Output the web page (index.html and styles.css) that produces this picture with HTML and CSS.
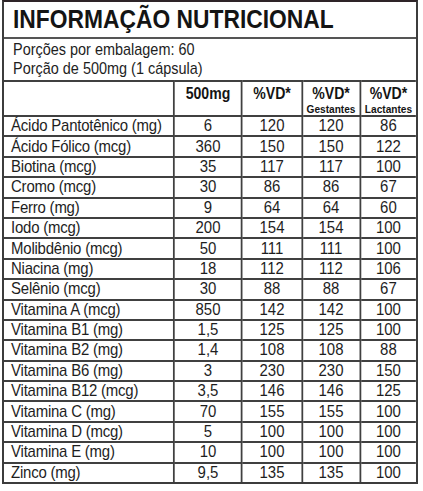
FILE: index.html
```html
<!DOCTYPE html>
<html lang="pt">
<head>
<meta charset="utf-8">
<title>Informação Nutricional</title>
<link rel="stylesheet" href="styles.css">
</head>
<body>
<div class="label">
  <div class="title"><span class="title-text">INFORMAÇÃO NUTRICIONAL</span></div>
  <div class="info">
    <div class="info-text">
      <div>Porções por embalagem: 60</div>
      <div>Porção de 500mg (1 cápsula)</div>
    </div>
  </div>
  <div class="table-wrap">
    <table class="nut">
      <colgroup>
        <col class="c-name"><col class="c-qty"><col class="c-vd"><col class="c-g"><col class="c-l">
      </colgroup>
      <thead>
        <tr>
          <th></th>
          <th>500mg</th>
          <th>%VD*</th>
          <th>%VD*<span class="sub">Gestantes</span></th>
          <th>%VD*<span class="sub">Lactantes</span></th>
        </tr>
      </thead>
      <tbody>
        <tr><td>Ácido Pantotênico (mg)</td><td>6</td><td>120</td><td>120</td><td>86</td></tr>
        <tr><td>Ácido Fólico (mcg)</td><td>360</td><td>150</td><td>150</td><td>122</td></tr>
        <tr><td>Biotina (mcg)</td><td>35</td><td>117</td><td>117</td><td>100</td></tr>
        <tr><td>Cromo (mcg)</td><td>30</td><td>86</td><td>86</td><td>67</td></tr>
        <tr><td>Ferro (mg)</td><td>9</td><td>64</td><td>64</td><td>60</td></tr>
        <tr><td>Iodo (mcg)</td><td>200</td><td>154</td><td>154</td><td>100</td></tr>
        <tr><td>Molibdênio (mcg)</td><td>50</td><td>111</td><td>111</td><td>100</td></tr>
        <tr><td>Niacina (mg)</td><td>18</td><td>112</td><td>112</td><td>106</td></tr>
        <tr><td>Selênio (mcg)</td><td>30</td><td>88</td><td>88</td><td>67</td></tr>
        <tr><td>Vitamina A (mcg)</td><td>850</td><td>142</td><td>142</td><td>100</td></tr>
        <tr><td>Vitamina B1 (mg)</td><td>1,5</td><td>125</td><td>125</td><td>100</td></tr>
        <tr><td>Vitamina B2 (mg)</td><td>1,4</td><td>108</td><td>108</td><td>88</td></tr>
        <tr><td>Vitamina B6 (mg)</td><td>3</td><td>230</td><td>230</td><td>150</td></tr>
        <tr><td>Vitamina B12 (mcg)</td><td>3,5</td><td>146</td><td>146</td><td>125</td></tr>
        <tr><td>Vitamina C (mg)</td><td>70</td><td>155</td><td>155</td><td>100</td></tr>
        <tr><td>Vitamina D (mcg)</td><td>5</td><td>100</td><td>100</td><td>100</td></tr>
        <tr><td>Vitamina E (mg)</td><td>10</td><td>100</td><td>100</td><td>100</td></tr>
        <tr><td>Zinco (mg)</td><td>9,5</td><td>135</td><td>135</td><td>100</td></tr>
      </tbody>
    </table>
  </div>
</div>
</body>
</html>
```

FILE: styles.css
```css
html, body {
  margin: 0;
  padding: 0;
  background: #ffffff;
}

body {
  padding: 0 0 0 2px;
  font-family: "Liberation Sans", Arial, sans-serif;
  color: #1e1e1e;
}

.label {
  width: 416px;
  box-sizing: border-box;
  border: 2px solid #3c3c3c;
  border-top-color: #2e2428;
  overflow: hidden;
}

.title {
  height: 37px;
  box-sizing: border-box;
  padding: 3px 0 0 9px;
  border-bottom: 2px solid #555;
  white-space: nowrap;
}

.title-text {
  display: inline-block;
  font-size: 25.5px;
  font-weight: bold;
  line-height: 29px;
  color: #141414;
  transform: scaleX(0.895);
  transform-origin: 0 50%;
}

.info {
  height: 41px;
  box-sizing: border-box;
  padding: 1px 0 0 9px;
  white-space: nowrap;
}

.info-text {
  font-size: 17px;
  line-height: 19px;
  transform: scaleX(0.85);
  transform-origin: 0 0;
}

.table-wrap {
  width: 412px;
  overflow: hidden;
}

.nut {
  width: 468.2px;
  border-collapse: collapse;
  table-layout: fixed;
  transform: scaleX(0.88);
  transform-origin: 0 0;
}

.c-name { width: 193.2px; }
.c-qty { width: 77.3px; }
.c-vd { width: 68.2px; }
.c-g { width: 65.9px; }
.c-l { width: 63.6px; }

.nut th,
.nut td {
  border: 2px solid #404040;
  padding: 0;
}

.nut tr > :first-child { border-left: none; }
.nut tr > :last-child { border-right: none; }
.nut tbody tr:last-child td { border-bottom: none; }

.nut th {
  height: 35px;
  box-sizing: border-box;
  vertical-align: top;
  padding-top: 3px;
  font-size: 16px;
  font-weight: bold;
  line-height: 18px;
  text-align: center;
  color: #141414;
}

.sub {
  display: block;
  font-size: 11.5px;
  line-height: 12px;
}

.nut td {
  height: 18.4px;
  font-size: 17px;
  line-height: 18px;
  text-align: center;
  white-space: nowrap;
}

.nut td:first-child {
  text-align: left;
  padding-left: 8px;
  letter-spacing: -0.25px;
}
```
